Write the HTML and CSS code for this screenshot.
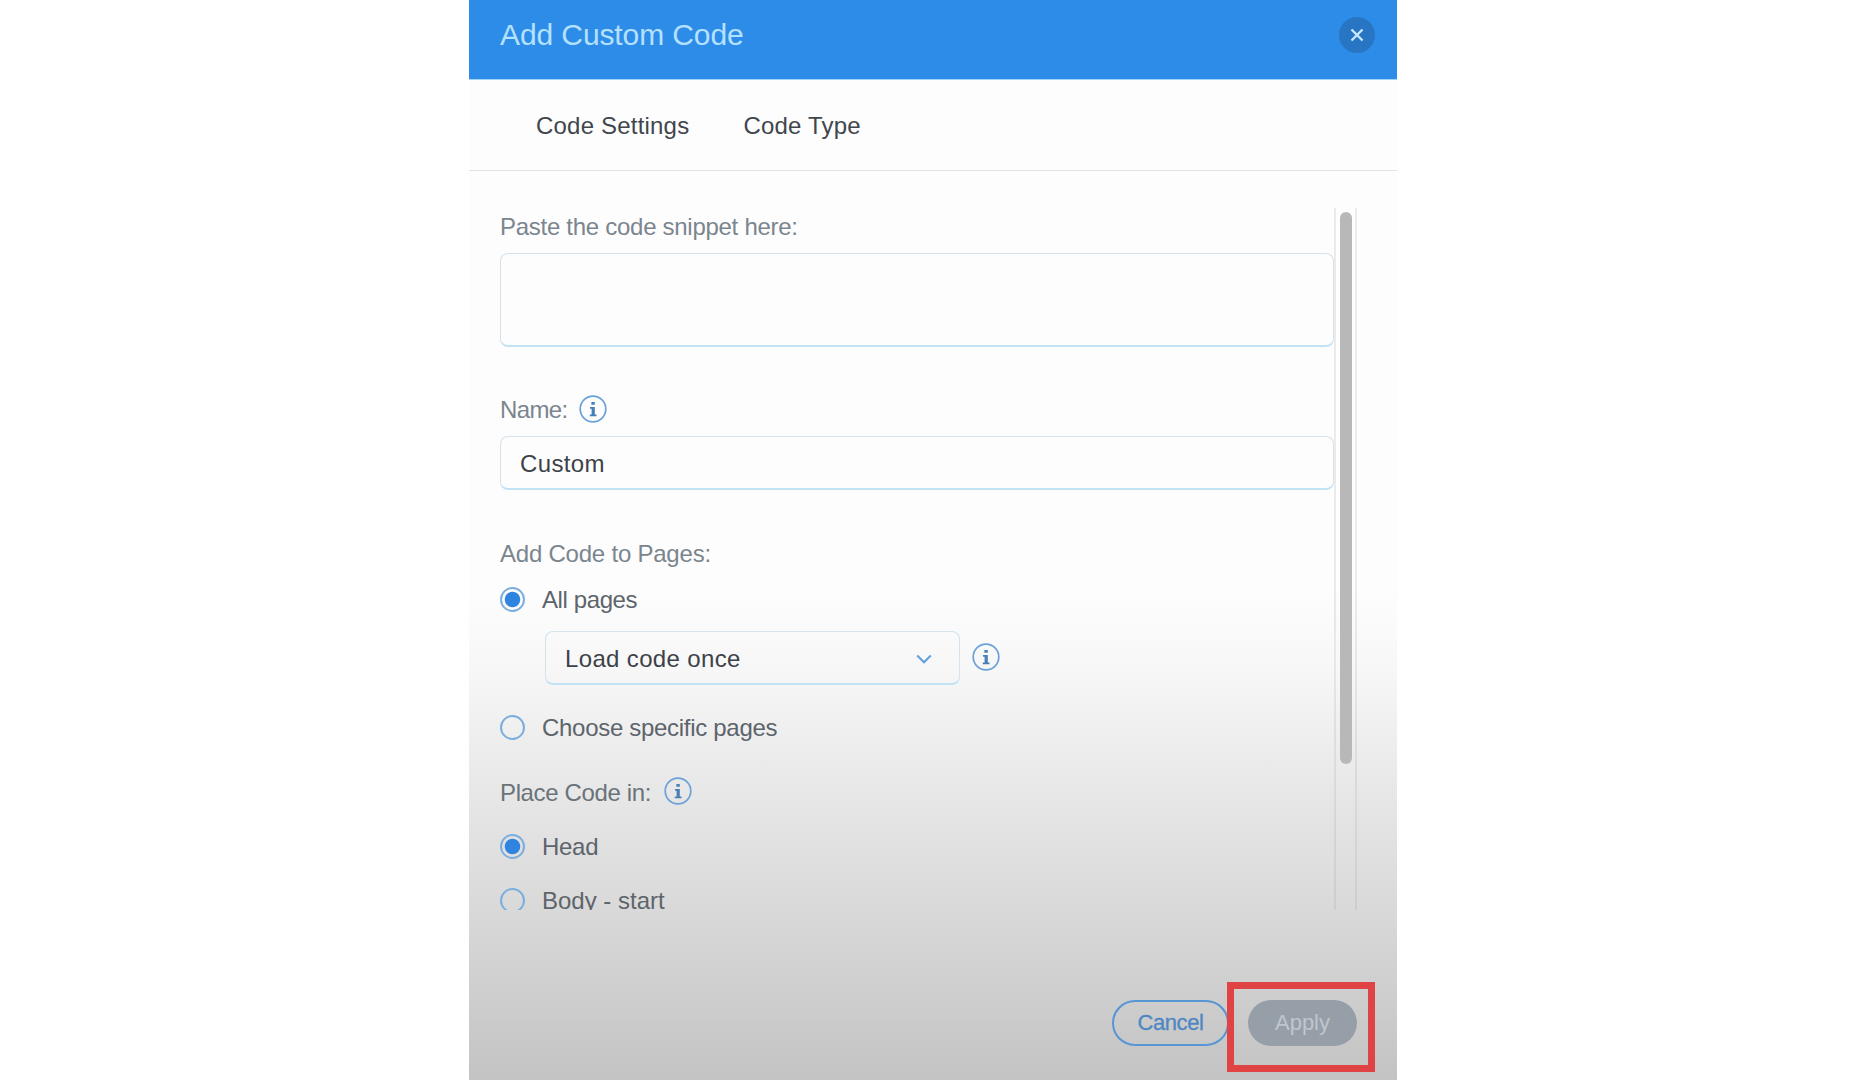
FILE: index.html
```html
<!DOCTYPE html>
<html lang="en">
<head>
  <meta charset="UTF-8" />
  <meta name="viewport" content="width=device-width, initial-scale=1" />
  <title>Add Custom Code</title>
  <link rel="stylesheet" href="styles.css">
</head>
<body>
  <div class="modal">
    <header class="modal-header">
      <h1>Add Custom Code</h1>
      <button class="close" aria-label="Close">
        <svg width="14" height="14" viewBox="0 0 14 14"><path d="M1.5 1.5l11 11M12.5 1.5l-11 11" /></svg>
      </button>
    </header>

    <nav class="tabs">
      <a class="tab-settings">Code Settings</a>
      <a class="tab-type">Code Type</a>
    </nav>

    <!-- Scrollable form -->
    <div class="content">
      <form class="form">
        <div class="label paste-label">Paste the code snippet here:</div>
        <div class="box snippet"></div>

        <div class="label name-label">
          <span class="name-text">Name:</span>
          <svg class="info" viewBox="0 0 28 28"><circle cx="14" cy="14" r="12.8" /><path d="M12.4 7h3.4v2.8h-3.4zM11 11.9h4.8v7.5h1.7v1.8h-6.7v-1.8h1.8v-5.7H11z" /></svg>
        </div>
        <div class="box name"><span>Custom</span></div>

        <div class="label pages-label">Add Code to Pages:</div>
        <div class="option all-pages"><i class="radio checked"></i><span>All pages</span></div>
        <div class="load-row">
          <div class="box select">
            <span>Load code once</span>
            <svg class="chevron" viewBox="0 0 16 10"><path d="M1.2 1.5L8 8.3l6.8-6.8" /></svg>
          </div>
          <svg class="info" viewBox="0 0 28 28"><circle cx="14" cy="14" r="12.8" /><path d="M12.4 7h3.4v2.8h-3.4zM11 11.9h4.8v7.5h1.7v1.8h-6.7v-1.8h1.8v-5.7H11z" /></svg>
        </div>
        <div class="option specific"><i class="radio"></i><span>Choose specific pages</span></div>

        <div class="label place-label">
          <span class="place-text">Place Code in:</span>
          <svg class="info" viewBox="0 0 28 28"><circle cx="14" cy="14" r="12.8" /><path d="M12.4 7h3.4v2.8h-3.4zM11 11.9h4.8v7.5h1.7v1.8h-6.7v-1.8h1.8v-5.7H11z" /></svg>
        </div>
        <div class="option head"><i class="radio checked"></i><span>Head</span></div>
        <div class="option body-start"><i class="radio"></i><span>Body - start</span></div>
      </form>
      <div class="scrollbar"><div class="thumb"></div></div>
    </div>

    <footer class="actions">
      <button class="btn cancel">Cancel</button>
      <div class="apply-wrap">
        <button class="btn apply">Apply</button>
        <div class="highlight"></div>
      </div>
    </footer>
  </div>
</body>
</html>
```
FILE: styles.css
```css
* {
  box-sizing: border-box;
}

body {
  margin: 0;
  background: #fff;
  font-family: "Liberation Sans", Arial, sans-serif;
  font-size: 24px;
  line-height: 28px;
  overflow: hidden;
}

.modal {
  width: 928px;
  height: 1080px;
  margin-left: 469px;
  display: flex;
  flex-direction: column;
  background: linear-gradient(to bottom, #fdfdfd 0, #fdfdfd 590px, #f7f7f7 670px, #ebebeb 760px, #d7d7d7 925px, #c3c3c3 1080px);
}

.modal-header {
  height: 80px;
  flex: none;
  display: flex;
  justify-content: space-between;
  align-items: flex-start;
  padding: 17px 22px 0 31px;
  background: #2e8ce9;
  border-bottom: 1px solid #a5d2fa;
}

.modal-header h1 {
  margin: 1px 0 0;
  font-size: 30px;
  line-height: 34px;
  font-weight: normal;
  letter-spacing: -0.1px;
  color: #b4e1ff;
}

.close {
  width: 36px;
  height: 36px;
  display: flex;
  align-items: center;
  justify-content: center;
  padding: 0;
  border: none;
  border-radius: 50%;
  background: #2876c3;
}

.close path {
  fill: none;
  stroke: #c8e8ff;
  stroke-width: 2.4;
}

.tabs {
  height: 91px;
  flex: none;
  display: flex;
  gap: 54px;
  padding: 32px 0 0 67px;
  border-bottom: 1px solid #e0e2e4;
  color: #41464c;
  letter-spacing: 0.2px;
}

.content {
  height: 702px;
  flex: none;
  display: flex;
  margin: 37px 0 0 31px;
  overflow: hidden;
}

.form {
  width: 834px;
}

.label {
  height: 28px;
  display: flex;
  align-items: center;
  color: #7b858e;
  white-space: nowrap;
}

.box {
  border: 1.5px solid #d5e3ec;
  border-bottom: 2px solid #c1e3f5;
  border-radius: 8px;
  color: #3d4248;
  letter-spacing: 0.35px;
}

.paste-label {
  margin-top: 5px;
  letter-spacing: -0.28px;
}

.snippet {
  height: 94px;
  margin-top: 12px;
}

.name-label {
  margin-top: 49px;
  letter-spacing: -0.6px;
}

.name {
  height: 54px;
  margin-top: 12px;
  padding: 13px 19px;
}

.pages-label {
  margin-top: 50px;
  letter-spacing: -0.22px;
}

.place-label {
  margin-top: 37px;
  color: #6b737a;
  letter-spacing: -0.36px;
}

.info {
  width: 28px;
  height: 28px;
  flex: none;
  margin-left: 11px;
  position: relative;
  top: -1px;
}

.place-label .info {
  margin-left: 13px;
  top: -2px;
}

.info circle {
  fill: none;
  stroke: #6ba2da;
  stroke-width: 1.7;
}

.info path {
  fill: #477fb7;
}

.option {
  height: 28px;
  display: flex;
  align-items: flex-start;
  gap: 17px;
  color: #5d646b;
  white-space: nowrap;
}

.radio {
  width: 25px;
  height: 25px;
  flex: none;
  margin-top: 1px;
  border: 2px solid #7baedf;
  border-radius: 50%;
}

.checked {
  background: radial-gradient(circle, #2e84df 7.2px, transparent 8.2px);
}

.all-pages {
  margin-top: 18px;
  letter-spacing: -0.4px;
}

.load-row {
  display: flex;
  align-items: center;
  margin: 17px 0 0 45px;
}

.load-row .info {
  margin-left: 12px;
  top: -1px;
}

.select {
  width: 415px;
  height: 54px;
  display: flex;
  align-items: center;
  justify-content: space-between;
  padding: 2px 27px 0 19px;
}

.chevron {
  width: 16px;
  height: 10px;
}

.chevron path {
  fill: none;
  stroke: #5e9fdc;
  stroke-width: 2;
}

.specific {
  margin-top: 29px;
  letter-spacing: -0.3px;
}

.head {
  margin-top: 26px;
  letter-spacing: -0.3px;
}

.body-start {
  margin-top: 26px;
}

.scrollbar {
  width: 23px;
  height: 702px;
  padding: 4px 0 0 4px;
  border-left: 2px solid rgba(150, 145, 150, 0.16);
  border-right: 2px solid rgba(150, 145, 150, 0.16);
}

.thumb {
  width: 12px;
  height: 552px;
  border-radius: 6px;
  background: #b9b8b9;
}

.actions {
  display: flex;
  justify-content: flex-end;
  gap: 19px;
  padding: 90px 40px 0 0;
}

.btn {
  height: 46px;
  padding: 0;
  border-radius: 23px;
  font-family: inherit;
  font-size: 22px;
  line-height: 26px;
}

.cancel {
  width: 117px;
  border: 2px solid #5796d4;
  background: none;
  color: #4f87c3;
  letter-spacing: -0.4px;
  -webkit-text-stroke: 0.3px #4f87c3;
}

.apply-wrap {
  position: relative;
  height: 46px;
}

.apply {
  width: 109px;
  border: none;
  background: #969fa8;
  color: #bfc6cd;
}

/* red frame drawn over the Apply button */
.highlight {
  position: absolute;
  top: -18px;
  left: -21px;
  width: 148px;
  height: 90px;
  border: 7.5px solid #df4343;
}
```
